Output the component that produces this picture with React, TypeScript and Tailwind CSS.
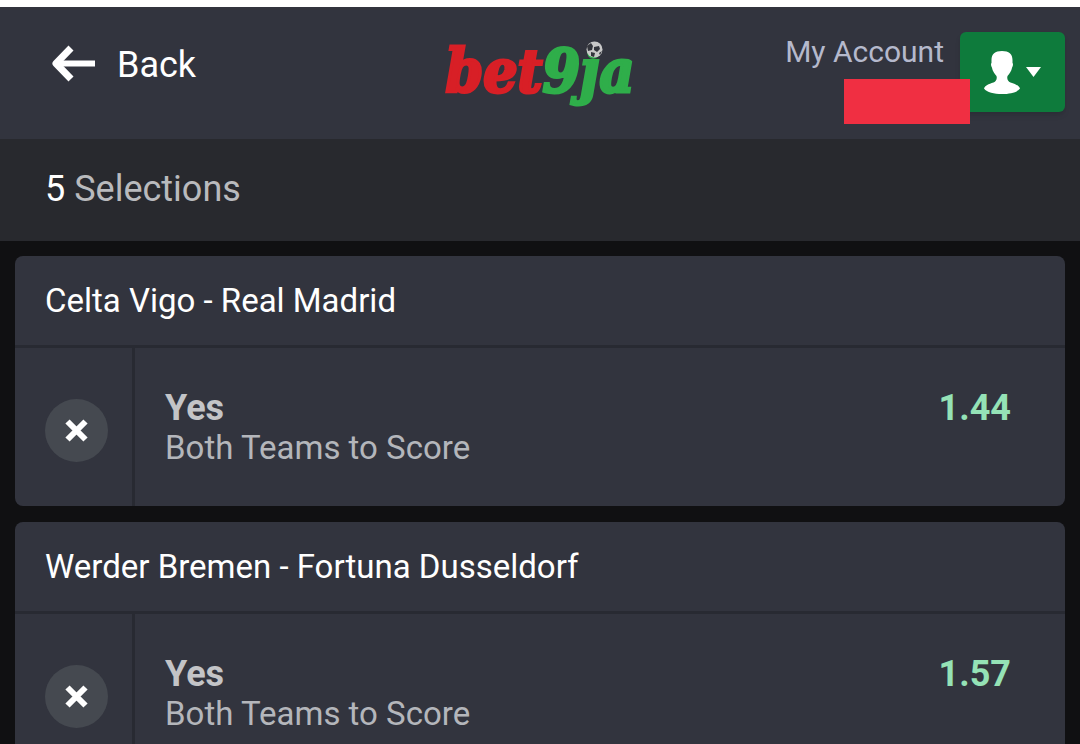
import { useState } from "react";

// ── Data ──────────────────────────────────────────────────────────────────────

interface Selection {
  id: number;
  event: string;
  pick: string;
  market: string;
  odds: string;
}

const SELECTIONS: Selection[] = [
  { id: 1, event: "Celta Vigo - Real Madrid", pick: "Yes", market: "Both Teams to Score", odds: "1.44" },
  { id: 2, event: "Werder Bremen - Fortuna Dusseldorf", pick: "Yes", market: "Both Teams to Score", odds: "1.57" },
];

const TOTAL_SELECTIONS = 5;

// ── Page ──────────────────────────────────────────────────────────────────────

export default function App() {
  const [items, setItems] = useState(SELECTIONS);
  const removed = SELECTIONS.length - items.length;

  const handleRemove = (id: number) => setItems((prev) => prev.filter((s) => s.id !== id));

  return (
    <div className="flex h-screen flex-col overflow-hidden border-t-[7px] border-white bg-[#101012] font-[Roboto,'Liberation_Sans',sans-serif]">
      <Header />
      <div className="shrink-0 bg-[#28292e] px-[45px] pt-[30px] pb-8 text-4xl leading-10 text-[#b9babd]">
        <span className="text-white">{TOTAL_SELECTIONS - removed}</span> Selections
      </div>
      <main className="flex flex-col gap-4 px-[15px] py-[15px]">
        {items.map((s) => (
          <SelectionCard key={s.id} selection={s} onRemove={() => handleRemove(s.id)} />
        ))}
      </main>
    </div>
  );
}

// ── Header ────────────────────────────────────────────────────────────────────

function Header() {
  return (
    <header className="grid h-[132px] shrink-0 grid-cols-[1fr_auto_1fr] items-start bg-[#32343e] px-[15px]">
      <button type="button" className="mt-8 ml-9 flex h-12 items-start gap-5 justify-self-start text-4xl text-white">
        <ArrowIcon />
        <span className="pt-1.5 leading-10">Back</span>
      </button>

      <Logo />

      <div className="mt-[25px] flex items-start gap-4 justify-self-end">
        <div className="flex flex-col items-end">
          <span className="h-[47px] text-[30px] leading-10 whitespace-nowrap text-[#b5b9cc]">My Account</span>
          {/* balance is hidden behind a solid block */}
          <div className="relative z-10 -mr-[26px] h-[45px] w-[126px] bg-[#f02f42]" />
        </div>
        <button
          type="button"
          aria-label="Account menu"
          className="flex h-20 w-[105px] items-center justify-center gap-1.5 rounded-md bg-[#0e7b3c] shadow-md"
        >
          <UserIcon />
          <CaretIcon />
        </button>
      </div>
    </header>
  );
}

function Logo() {
  return (
    <a
      href="#"
      className="relative mt-6 font-['DejaVu_Serif_Condensed','DejaVu_Serif',serif] text-[60px] leading-[80px] font-bold italic"
    >
      <span className="text-[#d81f26] [-webkit-text-stroke:3px_#d81f26]">bet</span>
      <span className="text-[#2fae4a] [-webkit-text-stroke:3px_#2fae4a]">9ja</span>
      <BallIcon />
    </a>
  );
}

// ── Selection card ────────────────────────────────────────────────────────────

function SelectionCard({ selection, onRemove }: { selection: Selection; onRemove: () => void }) {
  return (
    <section className="shrink-0 overflow-hidden rounded-lg bg-[#32343e]">
      <h2 className="border-b-[3px] border-[#282a32] px-[30px] pt-[25px] pb-6 text-[33px] leading-10 text-white">
        {selection.event}
      </h2>
      <div className="flex h-[158px]">
        <div className="flex w-[120px] items-center border-r-[3px] border-[#282a32] pl-[30px]">
          <button
            type="button"
            aria-label={`Remove ${selection.event}`}
            onClick={onRemove}
            className="mt-1.5 flex size-[63px] items-center justify-center rounded-full bg-[#454950]"
          >
            <CrossIcon />
          </button>
        </div>
        <div className="flex flex-1 justify-between pt-10 pr-[54px] pl-[30px]">
          <div>
            <p className="text-4xl leading-10 font-bold text-[#c3c4c7]">{selection.pick}</p>
            <p className="text-[33px] leading-10 text-[#b4b6bb]">{selection.market}</p>
          </div>
          <span className="text-4xl leading-10 font-bold text-[#95e2b6]">{selection.odds}</span>
        </div>
      </div>
    </section>
  );
}

// ── Icons ─────────────────────────────────────────────────────────────────────

function ArrowIcon() {
  return (
    <svg className="mt-1.5 h-[38px] w-[46px]" viewBox="0 0 46 38" fill="none" stroke="#fff" aria-hidden="true">
      <path d="M44 18.500H6" strokeWidth="6" />
      <path d="M20 3L5 18.500l15 15.500" strokeWidth="7" strokeLinejoin="round" />
    </svg>
  );
}

function UserIcon() {
  return (
    <svg className="h-[43px] w-9" viewBox="0 0 36 43" fill="#fff" aria-hidden="true">
      <path d="M18 0c7 0 10.500 3 10.500 9v3c.8.500.6 3-.4 4.500-.8 4-2.600 6-4.600 8.500-.8 3 .3 5.500 3 6.500 5 1.700 8.500 3 9.500 6C33 41.500 26 43 18 43S3 41.500 0 37.500c1-3 4.500-4.300 9.500-6 2.700-1 3.800-3.500 3-6.500-2-2.500-3.800-4.500-4.600-8.500-1-1.500-1.200-4-.4-4.500V9c0-6 3.500-9 10.500-9z" />
    </svg>
  );
}

function CaretIcon() {
  return (
    <svg className="h-2.5 w-[15px]" viewBox="0 0 15 10" fill="#fff" aria-hidden="true">
      <path d="M0 0h15L7.500 10z" />
    </svg>
  );
}

function CrossIcon() {
  return (
    <svg className="size-[23px]" viewBox="0 0 23 23" fill="none" stroke="#fff" strokeWidth="6" aria-hidden="true">
      <path d="M2.500 2.500l18 18M20.500 2.500l-18 18" />
    </svg>
  );
}

function BallIcon() {
  return (
    <svg className="absolute top-[10px] right-8 size-[17px]" viewBox="0 0 17 17" aria-hidden="true">
      <circle cx="8.500" cy="8.500" r="8" fill="#c9c9c9" />
      <path d="M1 5l4-3 2 3-1 4-4 1zM8 6l5-1 1 3-3 3-3-2zM5 11l4 1-1 4-3-1zM13 12l3-2-2 4z" fill="#33353c" />
    </svg>
  );
}
